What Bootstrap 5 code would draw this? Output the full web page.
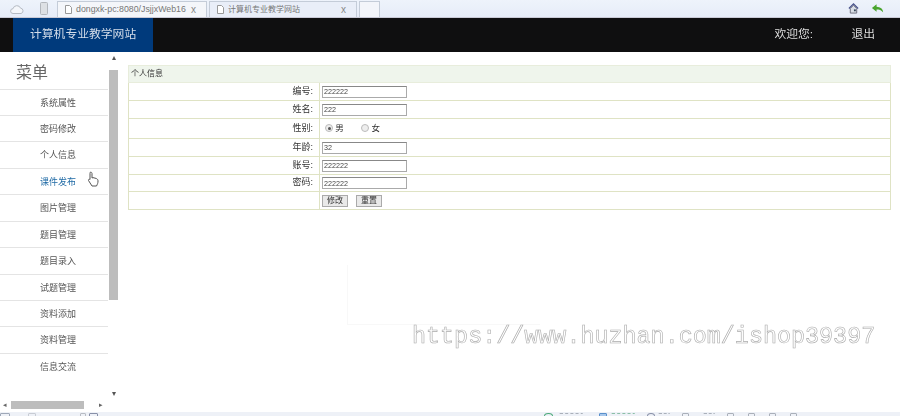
<!DOCTYPE html>
<html lang="zh">
<head>
<meta charset="utf-8">
<title>计算机专业教学网站</title>
<link href="https://cdn.jsdelivr.net/npm/bootstrap@5.3.0/dist/css/bootstrap.min.css" rel="stylesheet">
<style>
html,body{height:416px;overflow:hidden;background:#fff}
body{font-family:"Liberation Sans","Noto Sans CJK SC",sans-serif;color:#333;position:relative}
.shell{height:416px;filter:blur(.3px)}
.tabstrip{height:18px;background:linear-gradient(#eef3fb,#e6ecf8);border-bottom:1px solid #c9c9d6;padding-left:10px;font-size:8.8px;color:#777}
.tab-shape{height:16px;margin-top:1px;border:1px solid #c4ccd8;border-bottom:0;background:#f4f6fa;padding-left:7px;color:#777;white-space:nowrap;overflow:hidden}
.tab-a{width:150px;margin-left:9px}
.tab-b{width:148px;background:#e9eef8;margin-left:2px}
.tab-new{width:21px;margin-left:2px;background:#f3f5fa}
.tab-x{color:#888;font-size:10px;margin-left:auto;margin-right:10px}
.tab-b .tab-title{font-size:8px}
.topbar{height:34px;background:#0f0f10;padding-left:13px;padding-right:25px;color:#ddd;font-size:11.8px}
.brand-box{width:140px;background:#003a7c;color:#d5deea;padding-left:17px}
.welcome{width:77px}
.sidemenu{width:118px;height:360px}
.side-row{height:349px}
.menu-col{width:108px}
.menu-title{height:36.5px;padding-left:16px;font-size:16px;color:#666;line-height:42px}
.menu-list{border-top:1px solid #e4e4e4}
.menu-item{height:26.45px;line-height:27px;padding:0 0 0 40px;font-size:9px;color:#555;border-width:0 0 1px;border-color:#e4e4e4;background:transparent}
.menu-item.is-active{color:#1f6aa5}
.vbar{width:10px}
.vthumb{background:#bdbdbd;height:230px;width:9px;margin-left:1px}
.arrow-slot{height:18px;font-size:8px;color:#555;text-align:center;line-height:12px;margin-left:2px}
.arrow-down{height:101px;line-height:10px;padding-top:89px}
.hbar{height:11px;width:108px;font-size:7px;line-height:8px;color:#666}
.hthumb{width:73px;height:8px;background:#bdbdbd;margin:0 15px 0 4px}
.hbar-end{padding-left:3px}
.content-area{padding:13px 9px 0 10px}
.info-table{width:763px;font-size:9px;color:#333;border-collapse:collapse;margin:0}
.info-table td{border:1px solid #dfe3c4;padding:0;vertical-align:middle;background:transparent;color:#333}
.info-table .head-cell{background:#eff5ec;height:17px;padding-left:2px;text-align:left;font-size:8px;border-color:#e8eddc}
.info-table .lab{width:191px;text-align:right;padding-right:6px}
.info-table .val{padding-left:2px;font-size:8.5px}
.r18{height:18px}.r20{height:20px}.r17{height:17px}
.field{display:block;width:85px;height:12px;border:1px solid #aaa;border-top-color:#888;font-size:7.2px;padding:0 1px;line-height:10px;color:#444;background:#fff;border-radius:0}
.radio-dot{width:8px;height:8px;border-radius:50%;border:1px solid #bbb;background:#eee;display:inline-block;position:relative;vertical-align:-1px;margin-left:3px}
.radio-dot.on::after{content:"";position:absolute;left:1.5px;top:1.5px;width:3px;height:3px;border-radius:50%;background:#555}
.radio-dot.off{margin-left:15px}
.mini-btn{font-size:8px;height:12px;width:26px;padding:0;line-height:10px;background:#e9e9e9;border:1px solid #aaa;border-radius:0;color:#333}
.statusline{height:4px;background:#eef1f7;overflow:hidden;padding-top:1px}
.st{height:6px;display:block;flex:none;border:1px solid #9fa8b8;border-radius:1px}
.st-a{width:10px;margin-right:18px}
.st-b{width:8px;margin-right:44px;border-color:#c8ccd4}
.st-j{width:6px;margin-right:3px;border-color:#b8bcc4}
.st-k{width:9px;margin-right:446px;border-color:#8890a8}
.st-c{width:9px;border-color:#4aa878;border-radius:50%;margin-right:6px}
.st-d{width:24px;border-width:1px 0 0;border-color:#aab0ba;margin-right:16px;border-style:dashed}
.st-e{width:8px;border-color:#5a90cc;background:#a8c8ec;margin-right:4px}
.st-f{width:24px;border-width:1px 0 0;border-color:#8cc0a8;margin-right:12px;border-style:dashed}
.st-g{width:8px;border-color:#8890a8;border-radius:50%;margin-right:3px}
.st-h{width:12px;border-width:1px 0 0;border-color:#aab0ba;margin-right:12px;border-style:dashed}
.st-i{width:7px;border-color:#aab0ba;margin-right:14px}
.watermark{position:absolute;left:412px;top:322px;font-family:"Liberation Mono",monospace;font-size:23.4px;line-height:30px;color:#fff;-webkit-text-stroke:.6px #aaa;white-space:nowrap;opacity:.99}
.ghost-box{position:absolute;left:347px;top:265px;width:193px;height:60px;border:1px solid #f8f8f8;border-top:0;border-right:0}
.pointer{position:absolute;left:86px;top:171px}
</style>
</head>
<body>
<div class="shell d-flex flex-column">
  <div class="tabstrip d-flex align-items-center">
    <svg width="14" height="12" viewBox="0 0 14 12"><path d="M3 10.500a2.400 2.400 0 0 1 0-4.800 4 4 0 0 1 7.600-.5 2.700 2.700 0 0 1 .4 5.300z" fill="#f4f6fa" stroke="#b5bac2"/></svg>
    <svg class="ms-3" width="8" height="13" viewBox="0 0 8 13"><rect x=".5" y=".5" width="7" height="12" rx="1" fill="#dde0e4" stroke="#b2b6bc"/></svg>
    <div class="tab-shape tab-a d-flex align-items-center">
      <svg class="me-1 flex-shrink-0" width="7" height="9" viewBox="0 0 7 9"><path d="M.5.500h4l2 2v6h-6z" fill="#fff" stroke="#999"/></svg>
      <span class="tab-title">dongxk-pc:8080/JsjjxWeb16</span><span class="tab-x">x</span>
    </div>
    <div class="tab-shape tab-b d-flex align-items-center">
      <svg class="me-1 flex-shrink-0" width="7" height="9" viewBox="0 0 7 9"><path d="M.5.500h4l2 2v6h-6z" fill="#fff" stroke="#999"/></svg>
      <span class="tab-title">计算机专业教学网站</span><span class="tab-x">x</span>
    </div>
    <div class="tab-shape tab-new"></div>
    <div class="ms-auto d-flex align-items-center gap-2 pe-3">
      <svg width="11" height="11" viewBox="0 0 12 12"><path d="M1 6 6 1l5 5" fill="none" stroke="#46508a" stroke-width="1.400"/><path d="M2.500 6v5h7V6L6 2.500z" fill="#d9dee6" stroke="#667"/><rect x="6.500" y="7" width="2" height="2" fill="#345"/></svg>
      <svg class="ms-1" width="13" height="11" viewBox="0 0 14 11"><path d="M6 1 1 5l5 4V6.500c3 0 5 .6 7 3 0-4-3-5.500-7-6z" fill="#4aa52e"/></svg>
    </div>
  </div>
  <header class="topbar d-flex align-items-stretch">
    <div class="brand-box d-flex align-items-center">计算机专业教学网站</div>
    <div class="ms-auto d-flex align-items-center"><span class="welcome">欢迎您:</span><span>退出</span></div>
  </header>
  <div class="d-flex flex-grow-1">
    <aside class="sidemenu d-flex flex-column">
      <div class="d-flex side-row">
        <div class="menu-col">
          <div class="menu-title">菜单</div>
          <div class="list-group list-group-flush menu-list rounded-0">
            <a class="list-group-item menu-item" href="#">系统属性</a>
            <a class="list-group-item menu-item" href="#">密码修改</a>
            <a class="list-group-item menu-item" href="#">个人信息</a>
            <a class="list-group-item menu-item is-active" href="#">课件发布</a>
            <a class="list-group-item menu-item" href="#">图片管理</a>
            <a class="list-group-item menu-item" href="#">题目管理</a>
            <a class="list-group-item menu-item" href="#">题目录入</a>
            <a class="list-group-item menu-item" href="#">试题管理</a>
            <a class="list-group-item menu-item" href="#">资料添加</a>
            <a class="list-group-item menu-item" href="#">资料管理</a>
            <a class="list-group-item menu-item" href="#">信息交流</a>
          </div>
        </div>
        <div class="vbar">
          <div class="arrow-slot">▴</div>
          <div class="vthumb"></div>
          <div class="arrow-slot arrow-down">▾</div>
        </div>
      </div>
      <div class="hbar d-flex">
        <span class="hbar-end">◂</span>
        <div class="hthumb"></div>
        <span>▸</span>
      </div>
    </aside>
    <main class="content-area flex-grow-1">
      <table class="table info-table">
        <tr><td class="head-cell" colspan="2">个人信息</td></tr>
        <tr class="r18"><td class="lab">编号:</td><td class="val"><input class="field" value="222222"></td></tr>
        <tr class="r18"><td class="lab">姓名:</td><td class="val"><input class="field" value="222"></td></tr>
        <tr class="r20"><td class="lab">性别:</td><td class="val"><span class="radio-dot on"></span> 男 <span class="radio-dot off"></span> 女</td></tr>
        <tr class="r18"><td class="lab">年龄:</td><td class="val"><input class="field" value="32"></td></tr>
        <tr class="r18"><td class="lab">账号:</td><td class="val"><input class="field" value="222222"></td></tr>
        <tr class="r17"><td class="lab">密码:</td><td class="val"><input class="field" value="222222"></td></tr>
        <tr class="r18"><td class="lab"></td><td class="val"><div class="d-flex gap-2"><button class="btn mini-btn">修改</button><button class="btn mini-btn">重置</button></div></td></tr>
      </table>
    </main>
  </div>
  <div class="statusline d-flex">
    <span class="st st-a"></span><span class="st st-b"></span>
    <span class="st st-j"></span><span class="st st-k"></span>
    <span class="st st-c"></span><span class="st st-d"></span>
    <span class="st st-e"></span><span class="st st-f"></span>
    <span class="st st-g"></span><span class="st st-h"></span>
    <span class="st st-i"></span><span class="st st-h"></span>
    <span class="st st-i"></span><span class="st st-i"></span>
    <span class="st st-i"></span><span class="st st-i"></span>
  </div>
</div>
<div class="ghost-box"></div>
<svg class="pointer" width="14" height="17" viewBox="0 0 14 17"><path d="M4 1.500c1-.8 2 0 2 1V7l1-.4 1 .3 1 .2 1.500.5c1 .5 1.500 1.200 1.500 2.400 0 2-.5 3-1.500 5H6L2.500 9.500c-.5-1 .8-1.700 1.500-1V2.500z" fill="#fff" stroke="#555"/></svg>
<div class="watermark">https://www.huzhan.com/ishop39397</div>
</body>
</html>
